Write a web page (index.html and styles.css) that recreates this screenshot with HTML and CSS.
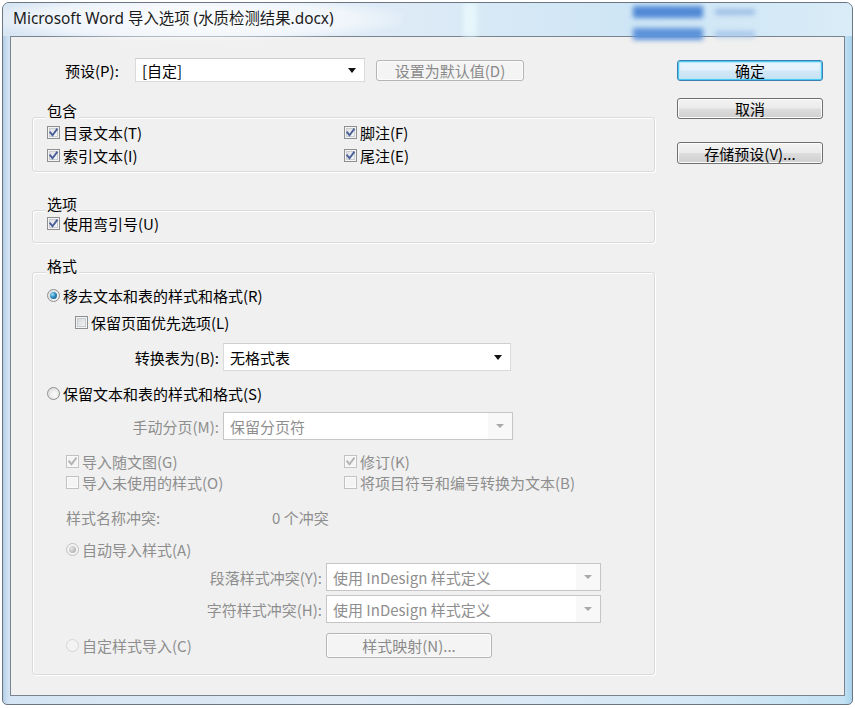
FILE: index.html
```html
<!DOCTYPE html>
<html lang="zh-CN">
<head>
<meta charset="utf-8">
<title>Microsoft Word 导入选项</title>
<link rel="stylesheet" href="styles.css">
</head>
<body>
<div class="window">
  <div class="titlebar">
    <span class="glow"></span>
    <span class="blob blob-a"></span>
    <span class="blob blob-b"></span>
    <span class="blob blob-c"></span>
    <span class="blob blob-d"></span>
    <span class="blob blob-e"></span>
    <div class="title">Microsoft Word 导入选项 (水质检测结果.docx)</div>
  </div>
  <div class="client">
    <div class="main">
      <div class="preset-row">
        <span class="preset-label">预设(P):</span>
        <div class="select preset-select"><span class="sel-text">[自定]</span><span class="arrow"></span></div>
        <div class="btn btn-disabled setdefault">设置为默认值(D)</div>
      </div>

      <div class="group group-include">
        <div class="legend">包含</div>
        <div class="cols gbody">
          <div class="col col-left">
            <div class="check-row"><span class="cb"><svg class="tick" viewBox="0 0 11 11"><path d="M2.2 5.4 L4.5 8.2 L8.9 2.4"/></svg></span><span>目录文本(T)</span></div>
            <div class="check-row"><span class="cb"><svg class="tick" viewBox="0 0 11 11"><path d="M2.2 5.4 L4.5 8.2 L8.9 2.4"/></svg></span><span>索引文本(I)</span></div>
          </div>
          <div class="col">
            <div class="check-row"><span class="cb"><svg class="tick" viewBox="0 0 11 11"><path d="M2.2 5.4 L4.5 8.2 L8.9 2.4"/></svg></span><span>脚注(F)</span></div>
            <div class="check-row"><span class="cb"><svg class="tick" viewBox="0 0 11 11"><path d="M2.2 5.4 L4.5 8.2 L8.9 2.4"/></svg></span><span>尾注(E)</span></div>
          </div>
        </div>
      </div>

      <div class="group group-options">
        <div class="legend">选项</div>
        <div class="check-row gbody"><span class="cb"><svg class="tick" viewBox="0 0 11 11"><path d="M2.2 5.4 L4.5 8.2 L8.9 2.4"/></svg></span><span>使用弯引号(U)</span></div>
      </div>

      <div class="group group-format">
        <div class="legend">格式</div>

        <div class="check-row row-r"><span class="rb rb-on"><span class="dot"></span></span><span>移去文本和表的样式和格式(R)</span></div>
        <div class="check-row row-l"><span class="cb cb-empty"></span><span>保留页面优先选项(L)</span></div>

        <div class="field-row row-convert">
          <span class="field-label">转换表为(B):</span>
          <div class="select convert-select"><span class="sel-text">无格式表</span><span class="arrow"></span></div>
        </div>

        <div class="check-row row-s"><span class="rb"></span><span>保留文本和表的样式和格式(S)</span></div>

        <div class="field-row row-manual">
          <span class="field-label dim">手动分页(M):</span>
          <div class="select select-disabled manual-select"><span class="sel-text">保留分页符</span><span class="arrow-zone"><span class="arrow"></span></span></div>
        </div>

        <div class="cols indent dim row-gk">
          <div class="col col-left2">
            <div class="check-row short"><span class="cb cb-disabled"><svg class="tick" viewBox="0 0 11 11"><path d="M2.2 5.4 L4.5 8.2 L8.9 2.4"/></svg></span><span>导入随文图(G)</span></div>
            <div class="check-row short"><span class="cb cb-disabled cb-empty"></span><span>导入未使用的样式(O)</span></div>
          </div>
          <div class="col">
            <div class="check-row short"><span class="cb cb-disabled"><svg class="tick" viewBox="0 0 11 11"><path d="M2.2 5.4 L4.5 8.2 L8.9 2.4"/></svg></span><span>修订(K)</span></div>
            <div class="check-row short"><span class="cb cb-disabled cb-empty"></span><span>将项目符号和编号转换为文本(B)</span></div>
          </div>
        </div>

        <div class="name-row indent dim">
          <span class="name-label">样式名称冲突:</span>
          <span>0 个冲突</span>
        </div>

        <div class="check-row indent dim row-a"><span class="rb rb-disabled rb-on"><span class="dot"></span></span><span>自动导入样式(A)</span></div>

        <div class="field-row row-para">
          <span class="field-label wide dim">段落样式冲突(Y):</span>
          <div class="select select-disabled conflict-select"><span class="sel-text">使用 InDesign 样式定义</span><span class="arrow-zone"><span class="arrow"></span></span></div>
        </div>
        <div class="field-row row-char">
          <span class="field-label wide dim">字符样式冲突(H):</span>
          <div class="select select-disabled conflict-select"><span class="sel-text">使用 InDesign 样式定义</span><span class="arrow-zone"><span class="arrow"></span></span></div>
        </div>

        <div class="custom-row indent dim">
          <div class="check-row custom-radio"><span class="rb rb-disabled rb-faint"></span><span>自定样式导入(C)</span></div>
          <div class="btn btn-disabled mapbtn">样式映射(N)...</div>
        </div>
      </div>
    </div>

    <div class="side">
      <div class="btn btn-default ok">确定</div>
      <div class="btn cancel">取消</div>
      <div class="btn save">存储预设(V)...</div>
    </div>
  </div>
</div>
</body>
</html>
```

FILE: styles.css
```css
* { box-sizing: border-box; }
html, body { margin: 0; padding: 0; background: #ffffff; }
body {
  font-family: "Noto Sans CJK SC", "Noto Sans", sans-serif;
  font-size: 15px;
  color: #000;
  line-height: 1;
}

.window {
  margin: 2px 0 0 2px;
  width: 851px;
  height: 703px;
  border: 1px solid #6b7682;
  border-radius: 7px 7px 5px 5px;
  background: linear-gradient(90deg, #b4cce6 0px, #c7dbef 3px, #d6e5f3 7px, #dfeaf5 40%, #d6e8f5 80%, #c4e2f3 99%, #a8d3ec 100%);
  display: flex;
  flex-direction: column;
  overflow: hidden;
}

.titlebar {
  position: relative;
  height: 33px;
  flex: none;
  display: flex;
  align-items: center;
  padding: 0 0 1px 10px;
  background: linear-gradient(90deg, #d7e5f3 0%, #e7eff8 20%, #dceaf6 50%, #cde5f5 75%, #d9ecf7 100%);
}
.title {
  position: relative;
  font-family: "Noto Sans", "Noto Sans CJK SC", sans-serif;
  font-size: 15.4px;
  color: #1b1b1b;
  white-space: nowrap;
}
.glow {
  position: absolute;
  left: -20px; top: -6px;
  width: 420px; height: 44px;
  background: radial-gradient(ellipse at center, rgba(255,255,255,0.85) 0%, rgba(255,255,255,0.5) 55%, rgba(255,255,255,0) 75%);
}
.blob {
  position: absolute;
  filter: blur(2.5px);
}
.blob-a { left: 630px; top: 3px; width: 70px; height: 12px; background: #5189d6; }
.blob-b { left: 630px; top: 25px; width: 70px; height: 12px; background: #5d93da; }
.blob-c { left: 712px; top: 6px; width: 40px; height: 6px; background: #9ebfe6; }
.blob-d { left: 712px; top: 28px; width: 40px; height: 6px; background: #a7c6ea; }
.blob-e { left: 460px; top: 0; width: 14px; height: 33px; background: #e6f6fb; }

.client {
  flex: 1;
  margin: 0 7px 8px 7px;
  border: 1px solid #79848f;
  background: #f0f0f0;
  display: flex;
  padding: 21px 21px 0 21px;
}

.main {
  width: 623px;
  display: flex;
  flex-direction: column;
}
.side {
  margin-left: 22px;
  width: 146px;
  display: flex;
  flex-direction: column;
}

/* preset row */
.preset-row {
  height: 24px;
  display: flex;
  align-items: center;
}
.preset-label {
  margin-left: 33px;
  width: 70px;
  white-space: nowrap;
}
.preset-select { width: 230px; height: 24px; }
.setdefault { margin-left: 11px; width: 148px; height: 21px; }

/* select */
.select {
  display: flex;
  align-items: center;
  justify-content: space-between;
  background: #fff;
  border: 1px solid #dadada;
  border-top-color: #cfcfcf;
  padding: 0 8px 0 6px;
}
.sel-text { white-space: nowrap; }
.arrow {
  width: 0; height: 0;
  border-left: 4.5px solid transparent;
  border-right: 4.5px solid transparent;
  border-top: 5px solid #111;
}
.select-disabled {
  border-color: #c6c6c6;
  color: #8e8e8e;
  padding: 0 0 0 6px;
  align-items: stretch;
}
.select-disabled .sel-text { display: flex; align-items: center; }
.arrow-zone {
  width: 24px;
  display: flex;
  align-items: center;
  justify-content: center;
  background: #f8f8f8;
}
.select-disabled .arrow { border-top-color: #a9a9a9; border-left-width: 4px; border-right-width: 4px; border-top-width: 4px; }

/* buttons */
.btn {
  display: flex;
  align-items: center;
  justify-content: center;
  border: 1px solid #707070;
  border-radius: 3px;
  background: linear-gradient(#f3f3f3 0%, #ebebeb 48%, #dddddd 52%, #cfcfcf 100%);
  box-shadow: inset 0 0 0 1px #fbfbfb;
  white-space: nowrap;
}
.btn-default {
  border-color: #3c7fb1;
  box-shadow: inset 0 0 0 1px #47c9f4, inset 0 0 1px 2px #b9e7f9;
  background: linear-gradient(#eaf6fd 0%, #e2f1fb 48%, #d2e8f6 52%, #c5e0f2 100%);
}
.btn-disabled {
  border-color: #b5b5b5;
  background: #f4f4f4;
  box-shadow: inset 0 0 0 1px #fcfcfc;
  color: #8a8a8a;
}
.ok { margin-top: 2px; height: 21px; }
.cancel { margin-top: 17px; height: 21px; }
.save { margin-top: 23px; height: 22px; }

/* groups */
.group {
  border: 1px solid #d9dbdd;
  border-radius: 3px;
  box-shadow: inset 1px 1px 0 #ffffff, 1px 1px 0 #ffffff;
  display: flex;
  flex-direction: column;
  padding-left: 14px;
}
.legend {
  align-self: flex-start;
  height: 16px;
  line-height: 16px;
  margin: -15px 0 -1px -1px;
  padding: 0 2px 0 1px;
  background: #f0f0f0;
}
.group-include { margin-top: 35px; padding-bottom: 4px; }
.group-include .gbody { margin-top: 3px; }
.group-options { margin-top: 38px; padding-bottom: 7px; }
.group-options .gbody { margin-top: 1px; }
.group-format { margin-top: 29px; padding-bottom: 16px; }

.cols { display: flex; }
.col { display: flex; flex-direction: column; }
.col-left { width: 297px; }
.col-left2 { width: 278px; }

.check-row {
  height: 23px;
  display: flex;
  align-items: center;
  gap: 3px;
  white-space: nowrap;
}
.check-row.short { height: 21px; }

/* checkbox */
.cb {
  flex: none;
  width: 13px;
  height: 13px;
  border: 1px solid #8e8f8f;
  background: linear-gradient(135deg, #d7d9dc 0%, #eef0f2 60%, #fbfbfb 100%);
  box-shadow: inset 0 0 0 1px #f3f3f3, inset 0 0 0 2px #c9ccd0;
  display: flex;
  align-items: center;
  justify-content: center;
}
.tick { width: 11px; height: 11px; }
.tick path { fill: none; stroke: #4a5f97; stroke-width: 1.9; stroke-linecap: square; }
.cb-empty {
  background: linear-gradient(135deg, #cfd1d4 0%, #e6e8ea 55%, #f6f6f6 100%);
}
.cb-disabled {
  border-color: #c2c2c2;
  background: #f4f4f4;
  box-shadow: inset 0 0 0 1px #fafafa;
}
.cb-disabled .tick path { stroke: #b3b3b3; }

/* radio */
.rb {
  flex: none;
  width: 13px;
  height: 13px;
  border-radius: 50%;
  border: 1px solid #8e8f8f;
  background: radial-gradient(circle at 60% 60%, #fdfdfd 0%, #e2e2e2 70%, #cfcfcf 100%);
  display: flex;
  align-items: center;
  justify-content: center;
}
.rb .dot {
  width: 7px;
  height: 7px;
  border-radius: 50%;
  background: radial-gradient(circle at 35% 35%, #a6e3fa 0%, #2d8bc0 45%, #0d4c74 100%);
}
.rb-disabled {
  border-color: #c0c0c0;
  background: #f4f4f4;
}
.rb-disabled .dot { background: radial-gradient(circle at 35% 35%, #e8e8e8 0%, #bdbdbd 60%, #a8a8a8 100%); }
.rb-faint { border-color: #d6d6d6; background: #f3f3f3; }

.dim { color: #8e8e8e; }
.indent { margin-left: 19px; }

/* format group rows */
.row-r { margin-top: 11px; }
.row-l { margin-top: 4px; margin-left: 28px; }
.field-row { display: flex; align-items: stretch; height: 28px; }
.field-label {
  width: 190px;
  margin-left: -14px;
  padding-right: 4px;
  text-align: right;
  display: flex;
  align-items: center;
  justify-content: flex-end;
  white-space: nowrap;
}
.field-label.wide { width: 293px; }
.row-convert { margin-top: 9px; }
.convert-select { width: 288px; }
.row-s { margin-top: 11px; }
.row-manual { margin-top: 7px; }
.manual-select { width: 290px; }
.row-gk { margin-top: 11px; }
.name-row { margin-top: 13px; height: 22px; display: flex; align-items: center; white-space: nowrap; }
.name-label { width: 206px; }
.row-a { margin-top: 10px; }
.row-para { margin-top: 2px; }
.row-char { margin-top: 4px; }
.conflict-select { width: 275px; }
.custom-row { margin-top: 10px; height: 25px; display: flex; align-items: center; }
.custom-radio { width: 260px; }
.mapbtn { width: 166px; height: 25px; }
```
